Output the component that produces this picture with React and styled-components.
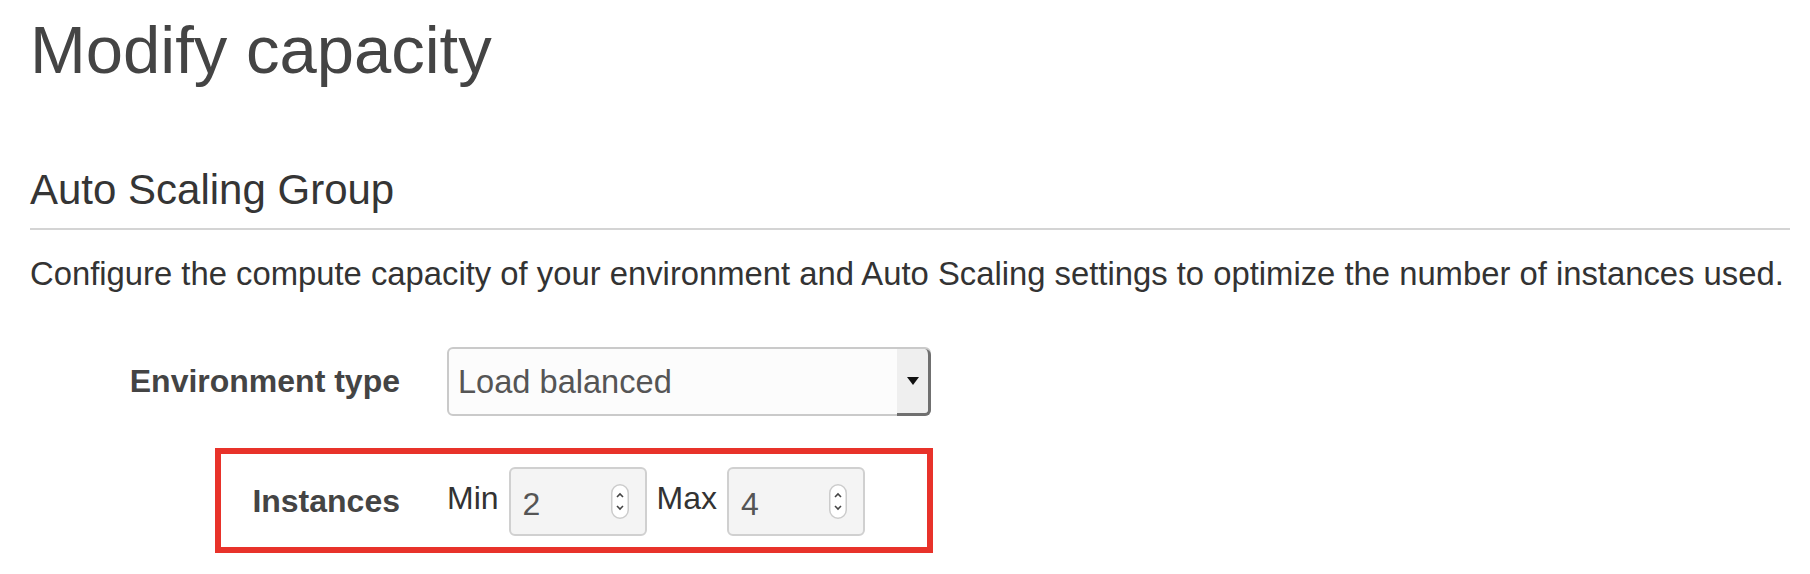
import React from 'react';
import styled, { createGlobalStyle } from 'styled-components';

const GlobalStyle = createGlobalStyle`
  body {
    margin: 0;
    background: #fff;
    font-family: "Liberation Sans", Arial, Helvetica, sans-serif;
    color: #333;
  }
`

const Page = styled.div`
  padding: 0 20px 0 30px;
`

const Title = styled.h1`
  margin: 10px 0 0;
  font-size: 67px;
  font-weight: 400;
  line-height: 1.2;
  color: #444;
`

const SectionTitle = styled.h3`
  margin: 75px 0 0;
  padding-bottom: 12px;
  border-bottom: 2px solid #d4d4d4;
  font-size: 42px;
  font-weight: 400;
  line-height: 1.2;
  color: #353535;
`

const Description = styled.p`
  margin: 24px 0 0;
  font-size: 32.8px;
  line-height: 1.2;
  color: #333;
`

const Form = styled.div`
  margin-top: 54px;
  display: flex;
  flex-direction: column;
  align-items: flex-start;
`

const FormRow = styled.div`
  display: grid;
  grid-template-columns: ${props => props.$labelWidth}px auto;
  column-gap: 47px;
  align-items: center;
`

const Highlight = styled.div`
  margin: 32px 0 0 185px;
  padding: 13px 62px 11px 0;
  border: 6px solid #e8322a;
`

const Label = styled.div`
  text-align: right;
  font-size: 32px;
  font-weight: 700;
  line-height: 1.2;
  color: #444;
`

const SelectBox = styled.div`
  box-sizing: border-box;
  width: 484px;
  height: 69px;
  display: flex;
  align-items: stretch;
  border: 2px solid #cacaca;
  border-radius: 6px;
  background: #fcfcfc;
`

const SelectValue = styled.div`
  flex: 1;
  display: flex;
  align-items: center;
  padding-left: 9px;
  font-size: 32.6px;
  color: #555;
`

const ArrowButton = styled.div`
  box-sizing: border-box;
  width: 34px;
  margin: 0 -2px -2px 0;
  display: flex;
  align-items: center;
  justify-content: center;
  background: #efefef;
  border-right: 3px solid #707070;
  border-bottom: 3px solid #707070;
  border-radius: 0 6px 6px 0;
`

const Caret = styled.span`
  width: 0;
  height: 0;
  border-left: 6px solid transparent;
  border-right: 6px solid transparent;
  border-top: 8px solid #111;
`

const Controls = styled.div`
  display: flex;
  align-items: center;
  gap: 10px;
`

const UnitLabel = styled.span`
  padding-bottom: 7px;
  font-size: 32px;
  line-height: 1.2;
  color: #333;
`

const NumberBox = styled.div`
  box-sizing: border-box;
  width: 138px;
  height: 69px;
  display: flex;
  align-items: center;
  justify-content: space-between;
  padding: 6px 16px 0 12px;
  border: 2px solid #d0d0d0;
  border-radius: 6px;
  background: #f4f4f4;
  font-size: 32px;
  color: #555;
`

const Spinner = styled.svg`
  margin-top: -6px;
  flex-shrink: 0;
`

function SpinnerIcon () {
  return (
    <Spinner width="18" height="35" viewBox="0 0 18 35">
      <rect x="0.75" y="0.75" width="16.5" height="33.5" rx="8.25" fill="#fff" stroke="#cccccc" strokeWidth="1.5" />
      <path d="M6 13 L9 10 L12 13" fill="none" stroke="#444" strokeWidth="1.6" />
      <path d="M6 22 L9 25 L12 22" fill="none" stroke="#444" strokeWidth="1.6" />
    </Spinner>
  );
}

function NumberField ({ value }) {
  return (
    <NumberBox>
      <span>{value}</span>
      <SpinnerIcon />
    </NumberBox>
  );
}

export default function App () {
  return (
    <Page>
      <GlobalStyle />
      <Title>Modify capacity</Title>
      <SectionTitle>Auto Scaling Group</SectionTitle>
      <Description>
        Configure the compute capacity of your environment and Auto Scaling settings to optimize the number of instances used.
      </Description>
      <Form>
        <FormRow $labelWidth={370}>
          <Label>Environment type</Label>
          <SelectBox>
            <SelectValue>Load balanced</SelectValue>
            <ArrowButton><Caret /></ArrowButton>
          </SelectBox>
        </FormRow>
        <Highlight>
          <FormRow $labelWidth={179}>
            <Label>Instances</Label>
            <Controls>
              <UnitLabel>Min</UnitLabel>
              <NumberField value="2" />
              <UnitLabel>Max</UnitLabel>
              <NumberField value="4" />
            </Controls>
          </FormRow>
        </Highlight>
      </Form>
    </Page>
  );
}
